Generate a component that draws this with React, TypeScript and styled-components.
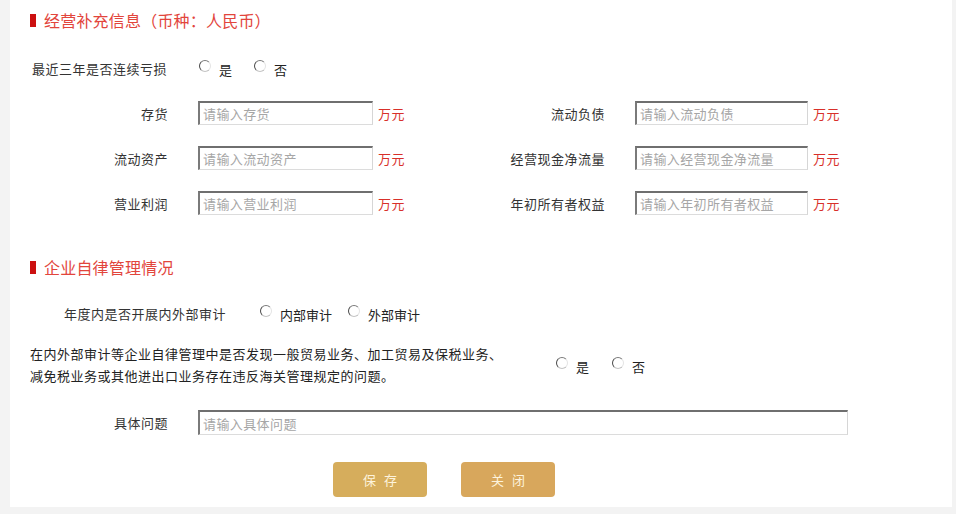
import styled, { createGlobalStyle } from "styled-components";

const GlobalStyle = createGlobalStyle`
  html, body {
    margin: 0;
    padding: 0;
    background: #f3f3f3;
  }
  body {
    font-family: "Noto Sans CJK SC", "Noto Sans", sans-serif;
    font-size: 13px;
    color: #333;
  }
`;

type Field = { label: string; placeholder: string };

const leftFields: Field[] = [
  { label: "存货", placeholder: "请输入存货" },
  { label: "流动资产", placeholder: "请输入流动资产" },
  { label: "营业利润", placeholder: "请输入营业利润" },
];

const rightFields: Field[] = [
  { label: "流动负债", placeholder: "请输入流动负债" },
  { label: "经营现金净流量", placeholder: "请输入经营现金净流量" },
  { label: "年初所有者权益", placeholder: "请输入年初所有者权益" },
];

function Radio({ label, name }: { label: string; name: string }) {
  return (
    <RadioOption>
      <input type="radio" name={name} />
      <RadioMark />
      <RadioText>{label}</RadioText>
    </RadioOption>
  );
}

function FieldItem({ label, placeholder, labelWidth, inputWidth }: Field & { labelWidth: number; inputWidth: number }) {
  return (
    <FieldBox>
      <FieldLabel $width={labelWidth}>{label}</FieldLabel>
      <TextInput $width={inputWidth} placeholder={placeholder} />
      <Unit>万元</Unit>
    </FieldBox>
  );
}

export default function App() {
  return (
    <>
      <GlobalStyle />
      <Panel>
        <SectionTitle>经营补充信息（币种：人民币）</SectionTitle>

        <InlineRow $top={30} $indent={2}>
          <RowLabel>最近三年是否连续亏损</RowLabel>
          <RadioGroup $offset={32} $gap={22}>
            <Radio name="loss" label="是" />
            <Radio name="loss" label="否" />
          </RadioGroup>
        </InlineRow>

        <FieldGrid>
          {leftFields.map((f, i) => [
            <FieldItem key={"l" + i} {...f} labelWidth={138} inputWidth={175} />,
            <FieldItem key={"r" + i} {...rightFields[i]} labelWidth={140} inputWidth={173} />,
          ])}
        </FieldGrid>

        <SectionTitle $top={44}>企业自律管理情况</SectionTitle>

        <InlineRow $top={28} $indent={34}>
          <RowLabel>年度内是否开展内外部审计</RowLabel>
          <RadioGroup $offset={34} $gap={16}>
            <Radio name="audit" label="内部审计" />
            <Radio name="audit" label="外部审计" />
          </RadioGroup>
        </InlineRow>

        <QuestionRow>
          <QuestionText>
            在内外部审计等企业自律管理中是否发现一般贸易业务、加工贸易及保税业务、
            <br />
            减免税业务或其他进出口业务存在违反海关管理规定的问题。
          </QuestionText>
          <RadioGroup $offset={26} $gap={23}>
            <Radio name="violate" label="是" />
            <Radio name="violate" label="否" />
          </RadioGroup>
        </QuestionRow>

        <DetailRow>
          <FieldLabel $width={138}>具体问题</FieldLabel>
          <TextInput $width={650} $height={25} placeholder="请输入具体问题" />
        </DetailRow>

        <ButtonBar>
          <ActionButton>保存</ActionButton>
          <ActionButton $tone="#d8a75c">关闭</ActionButton>
        </ButtonBar>
      </Panel>
    </>
  );
}

const Panel = styled.div`
  margin-left: 10px;
  width: 942px;
  background: #fff;
  padding: 0 20px 10px;
  box-sizing: border-box;
  display: flex;
  flex-direction: column;
`;

const SectionTitle = styled.div<{ $top?: number }>`
  margin-top: ${(p) => p.$top ?? 12}px;
  height: 16px;
  display: flex;
  align-items: center;
  gap: 8px;
  font-size: 16px;
  line-height: 16px;
  color: #e2453c;
  letter-spacing: 0.2px;

  &::before {
    content: "";
    width: 6px;
    height: 13px;
    background: #cc1010;
  }
`;

const InlineRow = styled.div<{ $top: number; $indent: number }>`
  margin-top: ${(p) => p.$top}px;
  padding-left: ${(p) => p.$indent}px;
  height: 20px;
  display: flex;
  align-items: center;
`;

const RowLabel = styled.span`
  letter-spacing: 0.5px;
  color: #333;
`;

const RadioGroup = styled.div<{ $offset: number; $gap: number }>`
  margin-left: ${(p) => p.$offset}px;
  display: flex;
  align-items: center;
  gap: ${(p) => p.$gap}px;
`;

const RadioOption = styled.label`
  display: flex;
  align-items: center;
  gap: 8px;
  font-size: 13px;
  color: #222;
  cursor: pointer;

  input {
    display: none;
  }
`;

const RadioMark = styled.span`
  width: 10px;
  height: 10px;
  border-radius: 50%;
  border: 1.5px solid #e4e4e4;
  border-left-color: #4a4a4a;
  border-top-color: #7a7a7a;
  border-bottom-color: #c4c4c4;
  background: #fff;
  margin-bottom: 5px;
`;

const RadioText = styled.span`
  padding-top: 3px;
`;

const FieldGrid = styled.div`
  margin-top: 23px;
  display: grid;
  grid-template-columns: 435px 1fr;
  row-gap: 21px;
`;

const FieldBox = styled.div`
  display: flex;
  align-items: center;
  height: 24px;
`;

const FieldLabel = styled.span<{ $width: number }>`
  width: ${(p) => p.$width}px;
  flex: none;
  text-align: right;
  letter-spacing: 0.5px;
  color: #333;
`;

const TextInput = styled.input<{ $width: number; $height?: number }>`
  margin-left: 30px;
  width: ${(p) => p.$width}px;
  height: ${(p) => p.$height ?? 24}px;
  box-sizing: border-box;
  border-style: solid;
  border-width: 2px 1px 1px 2px;
  border-color: #6f6f6f #d6d6d6 #dcdcdc #7a7a7a;
  padding: 0 3px;
  font-family: inherit;
  font-size: 13px;
  letter-spacing: 0.4px;
  outline: none;

  &::placeholder {
    color: #a6a6a6;
  }
`;

const Unit = styled.span`
  margin-left: 5px;
  color: #d8302a;
  font-size: 13px;
  letter-spacing: 0.5px;
`;

const QuestionRow = styled.div`
  margin-top: 20px;
  display: flex;
  align-items: center;
`;

const QuestionText = styled.p`
  margin: 0;
  width: 500px;
  line-height: 22px;
  letter-spacing: 0.5px;
  color: #222;
`;

const DetailRow = styled.div`
  margin-top: 23px;
  display: flex;
  align-items: center;
`;

const ButtonBar = styled.div`
  margin-top: 27px;
  padding-left: 303px;
  display: flex;
  gap: 34px;
`;

const ActionButton = styled.button<{ $tone?: string }>`
  width: 94px;
  height: 35px;
  border: none;
  border-radius: 4px;
  background: ${(p) => p.$tone ?? "#d6ad5c"};
  color: #fdf3dc;
  font-family: inherit;
  font-size: 13px;
  letter-spacing: 8px;
  text-indent: 8px;
  cursor: pointer;
`;
